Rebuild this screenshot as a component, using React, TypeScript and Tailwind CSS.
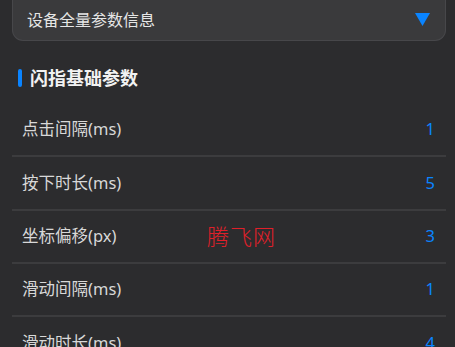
import React from "react";

const rows = [
  { label: "点击间隔(ms)", value: "1" },
  { label: "按下时长(ms)", value: "5" },
  { label: "坐标偏移(px)", value: "3" },
  { label: "滑动间隔(ms)", value: "1" },
  { label: "滑动时长(ms)", value: "4" },
];

export default function App() {
  return (
    <div
      className="relative w-[455px] h-[347px] overflow-hidden bg-[#2c2c2e] pl-[12px] pr-[9px]"
      style={{ fontFamily: '"Noto Sans", "Noto Sans CJK SC", sans-serif' }}
    >
      <div className="flex h-[41px] items-center justify-between rounded-b-[11px] border-x border-b border-[#47474a] bg-[#3a3a3c] pl-[14px] pr-[15px]">
        <span className="text-[16px] leading-none text-[#e6e6e6]">设备全量参数信息</span>
        <svg width="15" height="13" viewBox="0 0 15 13" className="mt-[-2px]">
          <polygon points="0,0 15,0 7.5,13" fill="#0a84ff" />
        </svg>
      </div>

      <div className="mt-[28px] flex items-center gap-[8px] pl-[6px]">
        <div className="h-[18px] w-[4px] rounded-full bg-[#0a84ff]" />
        <span className="text-[18px] font-bold leading-none text-[#f2f2f2]">闪指基础参数</span>
      </div>

      <div className="mt-[17px] flex flex-col">
        {rows.map((r, i) => (
          <div
            key={i}
            className="flex h-[53.3px] shrink-0 items-center justify-between border-b-[2px] border-[#3c3c3e] pl-[10px] pr-[11px]"
          >
            <span className="text-[16.5px] leading-none text-[#d8d8d8]">{r.label}</span>
            <span className="text-[16.5px] leading-none text-[#0a84ff]">{r.value}</span>
          </div>
        ))}
      </div>

      <div
        className="absolute left-[207px] top-[224px] text-[22px] leading-none tracking-[1px] text-[#e0202a]"
        style={{ fontFamily: '"Noto Sans CJK SC", sans-serif', fontWeight: 300 }}
      >
        腾飞网
      </div>
    </div>
  );
}
